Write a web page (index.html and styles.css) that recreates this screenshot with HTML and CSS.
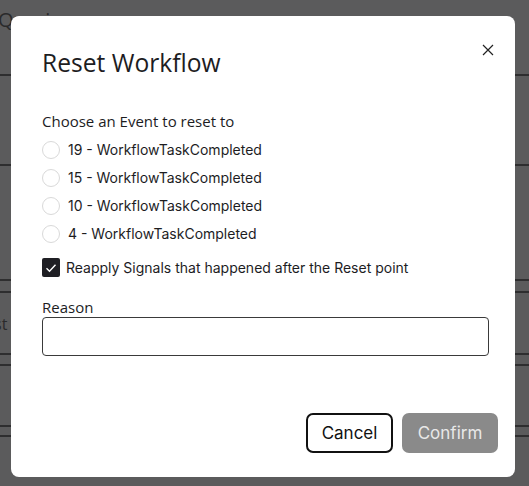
FILE: index.html
```
<!DOCTYPE html>
<html>
<head>
<meta charset="utf-8">
<link rel="stylesheet" href="styles.css">
</head>
<body>
<div class="page">
  <div class="row r1"><span class="bgtext">Queries</span></div>
  <div class="row r2"></div>
  <div class="row r3"></div>
  <div class="row r4"></div>
  <div class="row r5"><span class="bgtext st">st</span></div>
  <div class="row r6"></div>
  <div class="row r7"></div>
  <div class="row r8"></div>
</div>
<div class="modal">
  <button class="close" aria-label="Close">
    <svg width="12" height="12" viewBox="0 0 12 12"><path d="M1 1L11 11M11 1L1 11" stroke="#222" stroke-width="1.2" fill="none"/></svg>
  </button>
  <h1 class="title">Reset Workflow</h1>
  <p class="prompt">Choose an Event to reset to</p>
  <div class="options">
    <label class="option"><span class="radio"></span><span>19 - WorkflowTaskCompleted</span></label>
    <label class="option"><span class="radio"></span><span>15 - WorkflowTaskCompleted</span></label>
    <label class="option"><span class="radio"></span><span>10 - WorkflowTaskCompleted</span></label>
    <label class="option"><span class="radio"></span><span>4 - WorkflowTaskCompleted</span></label>
  </div>
  <label class="check-row">
    <span class="checkbox"><svg width="12" height="10" viewBox="0 0 12 10"><path d="M1.5 5.2L4.5 8.2L10.5 1.8" stroke="#fff" stroke-width="1.4" fill="none"/></svg></span>
    <span>Reapply Signals that happened after the Reset point</span>
  </label>
  <p class="reason-label">Reason</p>
  <div class="input"></div>
  <div class="actions">
    <button class="btn cancel">Cancel</button>
    <button class="btn confirm">Confirm</button>
  </div>
</div>
</body>
</html>
```
FILE: styles.css
```
html, body {
  margin: 0;
  padding: 0;
}
body {
  background: #5b5b5c;
  width: 529px;
  height: 486px;
  overflow: hidden;
  font-family: Inter, "Liberation Sans", sans-serif;
  color: #1d1d1f;
}
.page {
  display: flex;
  flex-direction: column;
}
.row {
  border-bottom: 2px solid #2e2e2f;
  box-sizing: border-box;
  position: relative;
}
.r1 { height: 76px; }
.r2 { height: 90px; }
.r3 { height: 115px; }
.r4 { height: 12px; }
.r5 { height: 62px; }
.r6 { height: 11px; }
.r7 { height: 61px; }
.r8 { height: 10px; }
.bgtext {
  font-family: "Open Sans", sans-serif;
  font-size: 20px;
  color: #2a2a2b;
  position: absolute;
  left: -2px;
  top: 6px;
}
.bgtext.st { top: 20px; left: -6px; font-size: 16px; }

.modal {
  position: fixed;
  left: 11px;
  top: 16px;
  width: 504px;
  height: 461px;
  box-sizing: border-box;
  background: #fff;
  border-radius: 8px;
  padding: 0 26px 0 31px;
  display: flex;
  flex-direction: column;
}
.close {
  position: absolute;
  right: 21px;
  top: 28px;
  background: none;
  border: 0;
  padding: 0;
  width: 12px;
  height: 12px;
  display: flex;
}
.title {
  margin: 32px 0 0;
  font-family: "Open Sans", sans-serif;
  font-weight: 400;
  font-size: 24.6px;
  line-height: 30px;
  color: #1d1d1f;
}
.prompt {
  margin: 33px 0 0;
  font-family: "Open Sans", sans-serif;
  font-size: 15px;
  line-height: 20px;
}
.options {
  display: flex;
  flex-direction: column;
  gap: 10px;
  margin-top: 10px;
}
.option {
  display: flex;
  align-items: center;
  gap: 8px;
  font-size: 14px;
  line-height: 18px;
}
.radio {
  width: 18px;
  height: 18px;
  box-sizing: border-box;
  border: 1px solid #d9d9d9;
  border-radius: 50%;
}
.check-row {
  display: flex;
  align-items: center;
  gap: 6px;
  margin-top: 15px;
  font-size: 14px;
  line-height: 19px;
}
.checkbox {
  width: 18px;
  height: 19px;
  border-radius: 2px;
  background: #1f1f24;
  display: flex;
  align-items: center;
  justify-content: center;
}
.reason-label {
  margin: 20px 0 0;
  font-family: "Open Sans", sans-serif;
  font-size: 15px;
  line-height: 20px;
}
.input {
  margin-top: 0;
  width: 447px;
  height: 39px;
  box-sizing: border-box;
  border: 1px solid #3a3a3a;
  border-radius: 4px;
}
.actions {
  margin-top: auto;
  margin-bottom: 24px;
  display: flex;
  justify-content: flex-end;
  gap: 9px;
  margin-right: -9px;
}
.btn {
  height: 40px;
  box-sizing: border-box;
  border-radius: 7px;
  font-family: Inter, "Liberation Sans", sans-serif;
  font-size: 17px;
  padding: 0;
}
.cancel {
  width: 87px;
  border: 2px solid #111;
  background: #fff;
  color: #111;
}
.confirm {
  width: 96px;
  border: 0;
  background: #8a8a8a;
  color: #e8e8e8;
}
```
